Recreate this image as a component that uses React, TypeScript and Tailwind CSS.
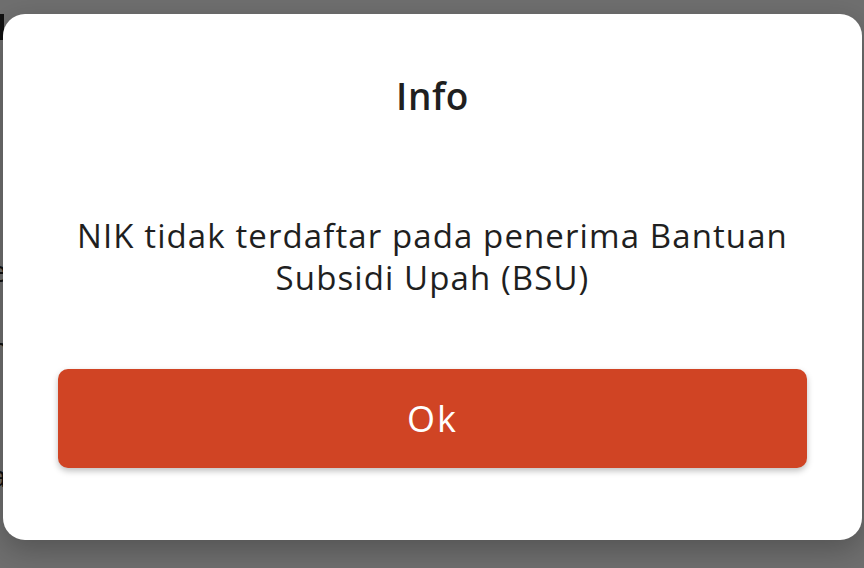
export default function App() {
  return (
    <div className="relative w-[864px] h-[568px] overflow-hidden bg-[#6f6f6f] font-['Open_Sans',sans-serif]">
      {/* page behind the dimmed overlay, only its left edge shows */}
      <div className="flex flex-col pt-[14px] -ml-[10px] text-[#111] text-[30px] leading-none">
        <div className="w-[14px] h-[26px] bg-[#111]" />
        <span className="mt-[216px]">e</span>
        <span className="mt-[47px]">n</span>
        <span className="mt-[98px]">a</span>
      </div>

      {/* dialog */}
      <div className="absolute left-[3px] top-[14px] w-[859px] h-[526px] rounded-[22px] bg-white shadow-[0_10px_30px_rgba(0,0,0,0.25)] flex flex-col items-center pt-[60px] px-[55px]">
        <h2 className="text-[37px] leading-[44px] font-semibold tracking-[0.5px] text-[#1f1f1f]">Info</h2>
        <p className="mt-[97px] text-center text-[33px] leading-[42px] tracking-[1.1px] text-[#1f1f1f]">
          NIK tidak terdaftar pada penerima Bantuan
          <br />
          Subsidi Upah (BSU)
        </p>
        <button className="mt-[70px] w-full h-[99px] rounded-[10px] bg-[#d04424] text-white text-[36px] tracking-[2px] shadow-[0_3px_6px_rgba(0,0,0,0.25)]">
          Ok
        </button>
      </div>
    </div>
  );
}
